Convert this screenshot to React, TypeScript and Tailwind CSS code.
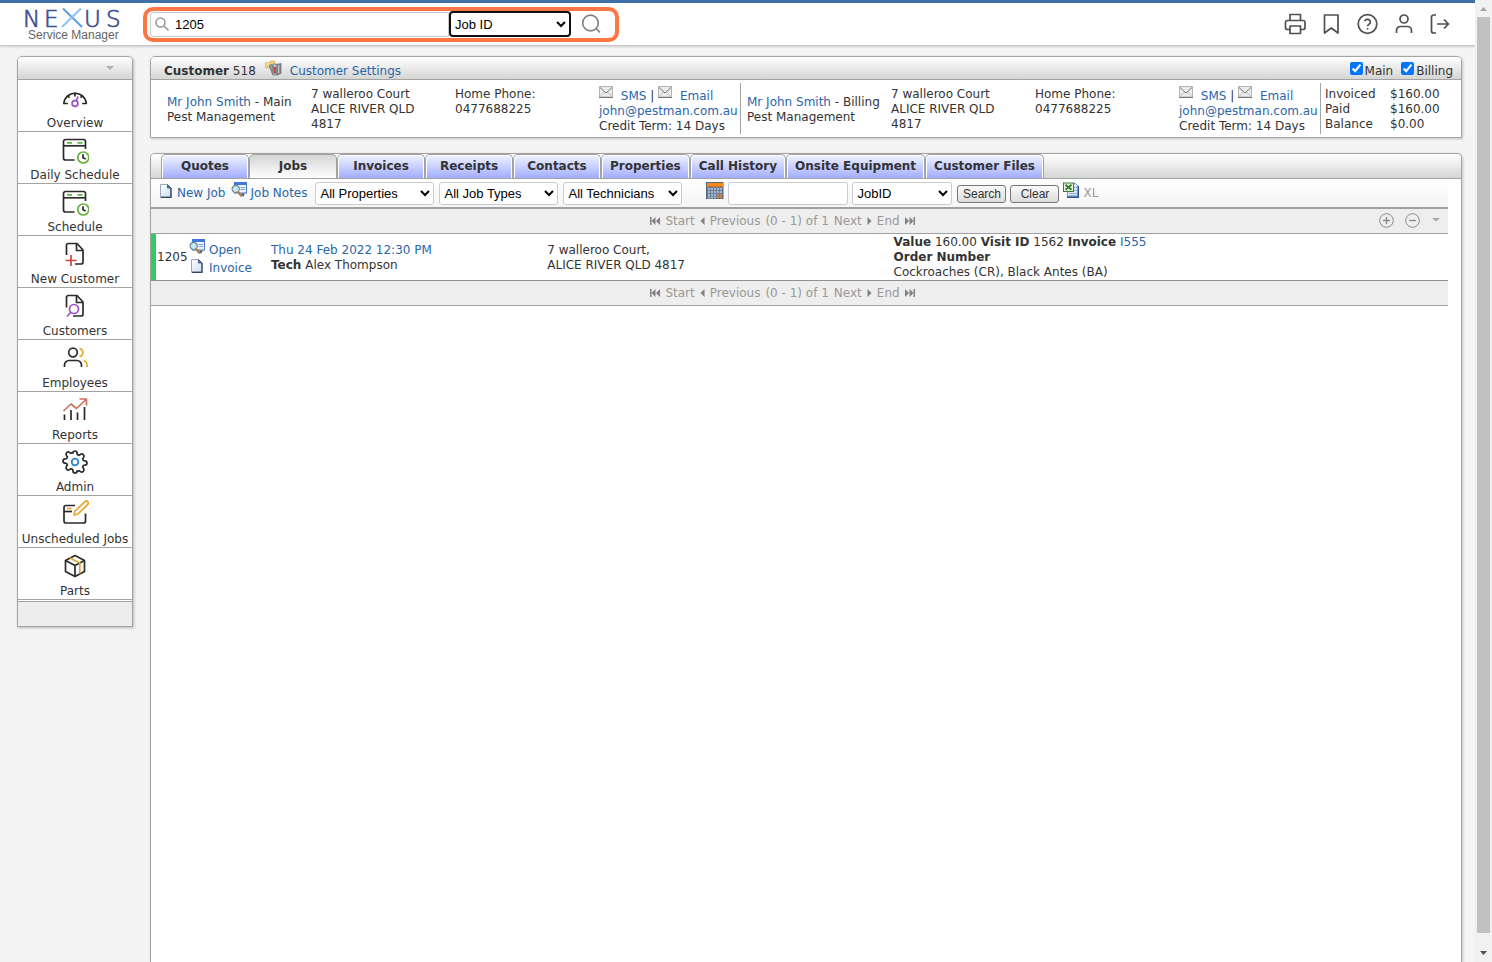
import type { ReactNode } from "react";

const link = "text-[#2a66a8] hover:underline";

/* ---------- small toolbar icons ---------- */

function PageIcon() {
  return (
    <svg width="12" height="14" viewBox="0 0 12 14" className="mb-1 shrink-0" aria-hidden="true">
      <defs>
        <linearGradient id="pg" x1="0" y1="0" x2="1" y2="1">
          <stop offset="0" stopColor="#ffffff" />
          <stop offset="1" stopColor="#cfdcec" />
        </linearGradient>
      </defs>
      <path d="M.5.5h7l3.500 3.500v9h-10.500z" fill="url(#pg)" stroke="#9aa9bf" />
      <path d="M11 4v9.300H.8" fill="none" stroke="#2f4468" strokeWidth="1.300" />
      <path d="M7.500.5V4H11z" fill="#5a76a3" stroke="#2f4468" strokeWidth=".7" />
    </svg>
  );
}

function NotesIcon() {
  return (
    <svg width="16" height="16" viewBox="0 0 16 16" className="shrink-0" aria-hidden="true">
      <rect x="3.500" y=".5" width="12" height="10.500" fill="#eef4fd" stroke="#4c77c4" />
      <rect x="3" y="0" width="13" height="3" fill="#3f78d8" />
      <path d="M9.500 5.500h4.500M9.500 7.500h4.500" stroke="#7f9fd4" />
      <path d="M10 11.500h4l-2 3.500z" fill="#4f5d72" />
      <circle cx="4.700" cy="7" r="3.600" fill="#c4e6f5" stroke="#6f8798" strokeWidth="1.200" />
      <path d="M7.200 10l3 3.800" stroke="#a9824f" strokeWidth="2.200" strokeLinecap="round" />
    </svg>
  );
}

function MailIcon() {
  return (
    <svg width="14" height="12" viewBox="0 0 14 12" className="mr-1 inline-block align-[2px]" aria-hidden="true">
      <rect x=".5" y=".5" width="13" height="10.500" fill="#ececec" stroke="#b4b4b4" />
      <path d="M1 10.500L5.500 6M13 10.500L8.500 6" stroke="#bdbdbd" fill="none" />
      <path d="M1 1.500l6 5.500 6-5.500" stroke="#777" fill="none" />
      <path d="M0 11.500h14" stroke="#777" />
    </svg>
  );
}

function SettingsIcon() {
  return (
    <svg width="17" height="16" viewBox="0 0 17 16" className="shrink-0" aria-hidden="true">
      <path d="M.5 2.500h4l1-1.500h4v7h-9z" fill="#f0cf7a" stroke="#dcb968" strokeWidth=".8" />
      <path d="M1 4h8" stroke="#fbe9b6" />
      <path d="M4 5.500l3-1.500 2.500 9.500-2 1z" fill="#8b97a8" stroke="#5e6878" strokeWidth=".6" />
      <rect x="8" y="4" width="4" height="11" fill="#b8bcc2" stroke="#73777e" strokeWidth=".7" />
      <rect x="8.500" y="7" width="2.500" height="6.500" fill="#d3492f" />
      <path d="M12 4.500l4-1v10l-4 1.500z" fill="#8d9096" stroke="#5f6268" strokeWidth=".7" />
      <path d="M13.500 5v8" stroke="#c9cbd0" />
    </svg>
  );
}

function CalendarIcon() {
  return (
    <svg width="18" height="17" viewBox="0 0 18 17" className="shrink-0" aria-hidden="true">
      <rect x=".5" y=".5" width="16.500" height="16" fill="#6d809b" stroke="#55657d" />
      <rect x="1" y="1" width="16" height="4" fill="#f58a1f" />
      <path d="M2 4.500h14" stroke="#c96a10" strokeDasharray="2 1" />
      <path d="M2 7h14M2 10h14M2 13h8M2 15.500h8" stroke="#b9c8dc" strokeWidth="1.600" strokeDasharray="2 1" />
      <path d="M11 13h5M11 15.500h5" stroke="#f58a1f" strokeWidth="1.600" strokeDasharray="2 1" />
    </svg>
  );
}

function ExcelIcon() {
  return (
    <svg width="16" height="16" viewBox="0 0 16 16" className="shrink-0" aria-hidden="true">
      <path d="M4.500 1.500h8l2.500 2.500v11h-10.500z" fill="#dfeafa" stroke="#7396cf" />
      <path d="M11 5.500h3M11 8.500h3M6 11.500h8M6 13.500h8" stroke="#8fb0df" />
      <path d="M15.300 4v11.300H4" fill="none" stroke="#2d4f96" strokeWidth="1.400" />
      <rect x=".5" y="1" width="10" height="8.500" fill="#e7f3e2" stroke="#3b7a35" />
      <path d="M2.500 2.800l6 5M8.500 2.800l-6 5" stroke="#2c7a2c" strokeWidth="1.800" />
    </svg>
  );
}

/* ---------- sidebar icons ---------- */

function Glyph({ children }: { children: ReactNode }) {
  return (
    <svg
      width="28"
      height="28"
      viewBox="0 0 28 28"
      fill="none"
      stroke="#2b2b2b"
      strokeWidth="1.700"
      strokeLinejoin="round"
      aria-hidden="true"
    >
      {children}
    </svg>
  );
}

function OverviewIcon() {
  return (
    <Glyph>
      <path d="M7 19.500H2.800a11.300 11.300 0 0 1 22.500 0h-4.200" />
      <path d="M14 8.500V12.500M6 11.500l2.500 2.200M22 11.500l-2.500 2.200" />
      <circle cx="14" cy="19.500" r="2.900" stroke="#9c50c8" />
      <path d="M15.200 17l1.800-4.500" stroke="#9c50c8" />
    </Glyph>
  );
}

function ScheduleIcon() {
  return (
    <Glyph>
      <path d="M13.500 24H4.500a2 2 0 0 1-2-2V5.500a2 2 0 0 1 2-2h18a2 2 0 0 1 2 2V13" />
      <path d="M2.500 9.800h22" />
      <path d="M6 6.800h5M16.500 6.800h5" stroke="#64b33c" />
      <circle cx="22.300" cy="21.500" r="5.500" stroke="#64b33c" strokeWidth="1.700" />
      <path d="M22 18.300v3.500l2.700 1.300" />
    </Glyph>
  );
}

function NewCustomerIcon() {
  return (
    <Glyph>
      <path d="M5.500 15V5.500a2 2 0 0 1 2-2H16l6 6.500v12a2 2 0 0 1-2 2h-6" />
      <path d="M15.500 4v6.500H22" />
      <path d="M10 15v11M4.500 20.500h11" stroke="#d2453c" />
    </Glyph>
  );
}

function CustomersIcon() {
  return (
    <Glyph>
      <path d="M5.500 15.500V5.500a2 2 0 0 1 2-2H16l6 6.500v12a2 2 0 0 1-2 2h-8" />
      <path d="M15.500 4v6.500H22" />
      <circle cx="13" cy="17" r="4.500" stroke="#9c50c8" />
      <path d="M9.800 20.200L6 24.500" stroke="#9c50c8" />
    </Glyph>
  );
}

function EmployeesIcon() {
  return (
    <Glyph>
      <circle cx="12" cy="8.500" r="4.300" />
      <path d="M3.500 23v-2a4.500 4.500 0 0 1 4.500-4.500h8a4.500 4.500 0 0 1 4.500 4.500v2" />
      <path d="M18.500 4.300a4.300 4.300 0 0 1 0 8.400M22.500 16.500a4.500 4.500 0 0 1 3.500 4.500v2" stroke="#e9a62c" />
    </Glyph>
  );
}

function ReportsIcon() {
  return (
    <Glyph>
      <path d="M3.500 18.500v5.500M10 14v10M16.500 16.500v7.500M23.500 11v13" />
      <path d="M2.500 15L10 8l5.500 4.500L25 3.500M18.500 3h7v6.500" stroke="#cf7260" />
    </Glyph>
  );
}

function AdminIcon() {
  return (
    <Glyph>
      <circle cx="14" cy="14" r="3.300" stroke="#2585c7" />
      <path d="M12 5Q12 3 14 3t2 2l.4 1.600 1.700.7 1.400-.9q1.500-1.100 2.800.2t.3 2.900l-1 1.400.7 1.600 1.700.3q2 .2 2 2.200t-2 2.100l-1.700.4-.7 1.600 1 1.400q1 1.600-.3 2.900t-2.800.2l-1.400-.9-1.700.7L16 23q0 2-2 2t-2-2l-.4-1.600-1.700-.7-1.400.9q-1.500 1.100-2.800-.2t-.3-2.900l1-1.400-.7-1.600-1.700-.4q-2-.1-2-2.100t2-2.200l1.700-.3.7-1.600-1-1.400q-1-1.600.3-2.900t2.800-.2l1.400.9 1.700-.7z" />
    </Glyph>
  );
}

function UnscheduledIcon() {
  return (
    <Glyph>
      <path d="M14 5.500H5a2 2 0 0 0-2 2V21a2 2 0 0 0 2 2h17.500a2 2 0 0 0 2-2v-7.500" />
      <path d="M3 11.500h8" />
      <path d="M6 8.500h4.500" stroke="#e9a62c" />
      <path d="M13 15l1-4L24 1.600q1.300-1.200 2.600 0t.2 2.800L17 14z" stroke="#e9a62c" />
    </Glyph>
  );
}

function PartsIcon() {
  return (
    <Glyph>
      <path d="M14 3.500l9.500 5v11L14 24.500l-9.500-5v-11z" />
      <path d="M4.500 8.500l9.500 5 9.500-5M14 13.500v11" />
      <path d="M9 6l9.800 5v10.500" stroke="#e9a62c" />
    </Glyph>
  );
}

const menu: { label: string; icon: ReactNode }[] = [
  { label: "Overview", icon: <OverviewIcon /> },
  { label: "Daily Schedule", icon: <ScheduleIcon /> },
  { label: "Schedule", icon: <ScheduleIcon /> },
  { label: "New Customer", icon: <NewCustomerIcon /> },
  { label: "Customers", icon: <CustomersIcon /> },
  { label: "Employees", icon: <EmployeesIcon /> },
  { label: "Reports", icon: <ReportsIcon /> },
  { label: "Admin", icon: <AdminIcon /> },
  { label: "Unscheduled Jobs", icon: <UnscheduledIcon /> },
  { label: "Parts", icon: <PartsIcon /> },
];

const tabs = [
  "Quotes",
  "Jobs",
  "Invoices",
  "Receipts",
  "Contacts",
  "Properties",
  "Call History",
  "Onsite Equipment",
  "Customer Files",
];

/* ---------- header ---------- */

function Logo() {
  return (
    <a href="#" aria-label="Nexus Service Manager" className="w-[120px] shrink-0 pl-6">
      <svg width="100" height="36" viewBox="0 0 100 36" className="block" aria-hidden="true">
        <g fontFamily="DejaVu Sans, sans-serif" fontSize="23" fontWeight="200" fill="#3d4f92" stroke="#3d4f92" strokeWidth=".7">
          <text x="-1" y="21">N</text>
          <text x="20" y="21">E</text>
          <text x="60" y="21">U</text>
          <text x="82" y="21">S</text>
        </g>
        <path d="M39 2.500L58 21" stroke="#58a0e8" strokeWidth="2" />
        <path d="M57 2.500L38 21" stroke="#8cc4f4" strokeWidth="2" />
        <text x="4" y="33" fontFamily="Liberation Sans, sans-serif" fontSize="12" fill="#666">
          Service Manager
        </text>
      </svg>
    </a>
  );
}

function HeaderIcon({ label, children }: { label: string; children: ReactNode }) {
  return (
    <button type="button" aria-label={label} className="size-6">
      <svg width="24" height="24" viewBox="0 0 24 24" fill="none" stroke="#505050" strokeWidth="1.700" strokeLinejoin="round" aria-hidden="true">
        {children}
      </svg>
    </button>
  );
}

function Header() {
  return (
    <header className="flex h-[46px] shrink-0 items-center border-t-3 border-b-1 border-t-[#4170a8] border-b-[#c8c8c8] bg-white shadow-[0_1px_2px_rgba(0,0,0,0.15)]">
      <Logo />
      <form className="ml-[23px] flex h-[35px] w-[476px] items-center rounded-[10px] border-4 border-[#ff7644] pl-[3px]" onSubmit={(e) => e.preventDefault()}>
        <label className="flex h-[25px] flex-1 items-center gap-[6px] rounded-l border border-[#c8c8c8] pl-1">
          <svg width="14" height="14" viewBox="0 0 14 14" fill="none" stroke="#999" strokeWidth="1.600" className="shrink-0" aria-hidden="true">
            <circle cx="5.500" cy="5.500" r="4.500" />
            <path d="M9 9l4.500 4.500" />
          </svg>
          <input aria-label="Search" defaultValue="1205" className="w-full min-w-0 bg-transparent font-['Liberation_Sans',sans-serif] text-[13px] text-black outline-none" />
        </label>
        <select aria-label="Search by" className="h-[26px] w-[122px] rounded-[4px] border-2 border-[#101010] bg-white font-['Liberation_Sans',sans-serif] text-[13px] text-black">
          <option>Job ID</option>
        </select>
        <button type="submit" aria-label="Go" className="w-11 pl-[10px]">
          <svg width="21" height="20" viewBox="0 0 21 20" fill="none" stroke="#808080" strokeWidth="1.700" aria-hidden="true">
            <circle cx="9.500" cy="9" r="7.800" />
            <path d="M15 14.500l4 4" />
          </svg>
        </button>
      </form>
      <nav className="ml-auto flex gap-3 pr-[23px]" aria-label="Account">
        <HeaderIcon label="Print">
          <path d="M6 8.500V2.500h10.500v6M6 17.500H3.500a2 2 0 0 1-2-2v-5a2 2 0 0 1 2-2h15.500a2 2 0 0 1 2 2v5a2 2 0 0 1-2 2h-2.500" />
          <path d="M6 14h10.500v7.500h-10.500z" />
        </HeaderIcon>
        <HeaderIcon label="Bookmarks">
          <path d="M4.500 3h13.500v18l-6.700-5-6.800 5z" />
        </HeaderIcon>
        <HeaderIcon label="Help">
          <circle cx="11.500" cy="12" r="9.300" />
          <path d="M8.700 9.200a2.900 2.900 0 0 1 5.600 1c0 1.900-2.800 2.500-2.800 4M11.500 16v1.500" />
        </HeaderIcon>
        <HeaderIcon label="Profile">
          <circle cx="12" cy="7" r="4" />
          <path d="M4.500 21v-2.500a4 4 0 0 1 4-4h7a4 4 0 0 1 4 4V21" />
        </HeaderIcon>
        <HeaderIcon label="Log out">
          <path d="M8 3H5.500a2 2 0 0 0-2 2v14a2 2 0 0 0 2 2H8M9 12h11.500M16 7.500l4.500 4.500-4.500 4.500" />
        </HeaderIcon>
      </nav>
    </header>
  );
}

/* ---------- sidebar ---------- */

function Sidebar() {
  return (
    <nav aria-label="Main menu" className="w-[116px] shrink-0 self-start rounded-t-[5px] border border-[#a3a3a3] bg-white shadow-[1px_1px_3px_rgba(0,0,0,0.25)]">
      <div className="flex h-[23px] items-center justify-end rounded-t-[4px] border-b border-[#a3a3a3] bg-linear-to-b from-white to-[#d4d6d4] pr-[18px]">
        <svg width="8" height="4" viewBox="0 0 8 4" aria-hidden="true">
          <path d="M0 0h8L4 4z" fill="#b0b0b0" />
        </svg>
      </div>
      <ul>
        {menu.map((m) => (
          <li key={m.label} className="border-b border-[#a3a3a3]">
            <a href="#" className="flex h-[51px] flex-col items-center justify-end gap-1 whitespace-nowrap hover:bg-[#f4f4f4]">
              {m.icon}
              <span className="leading-[15px]">{m.label}</span>
            </a>
          </li>
        ))}
      </ul>
      <div className="mt-px h-[25px] border-t border-[#a3a3a3] bg-[#ededed]" />
    </nav>
  );
}

/* ---------- customer summary ---------- */

function Party({ role }: { role: string }) {
  return (
    <section className="grid flex-1 grid-cols-[1fr_1fr_1fr_141px] items-center border-r border-[#a3a3a3] pt-[2px] pl-[6px] whitespace-nowrap">
      <p>
        <a href="#" className={link}>
          Mr John Smith
        </a>{" "}
        - {role}
        <br />
        Pest Management
      </p>
      <p>
        7 walleroo Court
        <br />
        ALICE RIVER QLD
        <br />
        4817
      </p>
      <p className="self-start pt-[2px]">
        Home Phone:
        <br />
        0477688225
      </p>
      <p>
        <MailIcon />{" "}
        <a href="#" className={link}>
          SMS
        </a>{" "}
        | <MailIcon />{" "}
        <a href="#" className={link}>
          Email
        </a>
        <br />
        <a href="#" className={link}>
          john@pestman.com.au
        </a>
        <br />
        Credit Term: 14 Days
      </p>
    </section>
  );
}

function CustomerPanel() {
  return (
    <section className="rounded-t-[5px] border border-[#a3a3a3] bg-white shadow-[1px_1px_3px_rgba(0,0,0,0.2)]">
      <div className="flex h-[23px] items-center rounded-t-[4px] border-b border-[#a3a3a3] bg-linear-to-b from-white to-[#d4d6d4] pr-2 pl-[13px]">
        <h1 className="pt-[6px] leading-[15px]">
          <b>Customer</b> 518
        </h1>
        <a href="#" className={`ml-[9px] flex items-center gap-2 ${link}`}>
          <SettingsIcon />
          <span className="pt-[6px] leading-[15px]">Customer Settings</span>
        </a>
        <div className="ml-auto flex gap-2">
          <label className="flex items-center gap-[2px]">
            <input type="checkbox" defaultChecked className="size-[13px]" />
            <span className="pt-[6px] leading-[15px]">Main</span>
          </label>
          <label className="flex items-center gap-[2px]">
            <input type="checkbox" defaultChecked className="size-[13px]" />
            <span className="pt-[6px] leading-[15px]">Billing</span>
          </label>
        </div>
      </div>
      <div className="flex py-[3px] pl-[10px] [&>section]:h-[51px]">
        <Party role="Main" />
        <Party role="Billing" />
        <dl className="grid w-[140px] shrink-0 grid-cols-[65px_1fr] content-center pt-[2px] pl-1">
          <dt>Invoiced</dt>
          <dd>$160.00</dd>
          <dt>Paid</dt>
          <dd>$160.00</dd>
          <dt>Balance</dt>
          <dd>$0.00</dd>
        </dl>
      </div>
    </section>
  );
}

/* ---------- jobs ---------- */

function Filter({ label, value, width }: { label: string; value: string; width: string }) {
  return (
    <select aria-label={label} className={`h-[23px] rounded-[3px] border border-[#ccc] bg-white font-['Liberation_Sans',sans-serif] text-[13px] text-black ${width}`}>
      <option>{value}</option>
    </select>
  );
}

function Toolbar() {
  const button =
    "h-[18px] w-[49px] rounded-[3px] border border-[#767676] bg-linear-to-b from-[#fafafa] to-[#dcdcdc] font-['Liberation_Sans',sans-serif] text-[12px] leading-[16px] text-[#333]";
  return (
    <div className="flex h-[30px] items-center border-b-2 border-[#a0a0a0] bg-linear-to-b from-white to-[#f5f5f5] pl-[9px]">
      <a href="#" className={`flex items-center gap-[5px] ${link}`}>
        <PageIcon />
        New Job
      </a>
      <a href="#" className={`ml-[5px] flex items-center gap-1 ${link}`}>
        <span className="pb-[6px]">
          <NotesIcon />
        </span>
        Job Notes
      </a>
      <div className="ml-2 flex gap-[5px]">
        <Filter label="Property" value="All Properties" width="w-[119px]" />
        <Filter label="Job type" value="All Job Types" width="w-[119px]" />
        <Filter label="Technician" value="All Technicians" width="w-[119px]" />
      </div>
      <button type="button" aria-label="Pick a date" className="ml-6 pb-[6px]">
        <CalendarIcon />
      </button>
      <div className="ml-1 flex items-center gap-1">
        <input aria-label="Search text" className="h-[23px] w-[120px] rounded-[3px] border border-[#ccc] bg-white px-1" />
        <Filter label="Search field" value="JobID" width="w-[100px]" />
        <div className="flex items-center gap-1 pt-[2px] pl-px">
          <button type="button" className={button}>
            Search
          </button>
          <button type="button" className={button}>
            Clear
          </button>
        </div>
        <a href="#" className="flex items-center gap-1 text-[#999]">
          <span className="pb-[6px]">
            <ExcelIcon />
          </span>
          XL
        </a>
      </div>
    </div>
  );
}

function Step({ d, width }: { d: string; width: string }) {
  return (
    <svg width={width} height="8" viewBox={`0 0 ${width} 8`} fill="#808080" className="mb-px" aria-hidden="true">
      <path d={d} />
    </svg>
  );
}

function Pager({ controls = false }: { controls?: boolean }) {
  return (
    <div className="grid h-[25px] grid-cols-[42px_1fr_76px] items-center border-b border-[#a0a0a0] bg-[#eee] text-[#999]">
      <div className="col-start-2 flex items-center justify-center gap-[5px]">
        <button type="button" className="flex items-center gap-[5px]">
          <Step width="10" d="M0 0h1.500v8H0zM5.500 0v8L1.500 4zM10 0v8L6 4z" />
          Start
        </button>
        <button type="button" className="flex items-center gap-[5px]">
          <Step width="5" d="M4.500 0v8L.5 4z" />
          Previous
        </button>
        <span>(0 - 1) of 1</span>
        <button type="button" className="flex items-center gap-[5px]">
          Next
          <Step width="5" d="M.5 0v8l4-4z" />
        </button>
        <button type="button" className="flex items-center gap-[5px]">
          End
          <Step width="10" d="M8.500 0H10v8H8.500zM4.500 0v8l4-4zM0 0v8l4-4z" />
        </button>
      </div>
      {controls && (
        <div className="flex items-center gap-[10px] pb-[2px] pl-[6px]">
          <button type="button" aria-label="Expand all">
            <svg width="16" height="16" viewBox="0 0 16 16" fill="none" stroke="#8a8a8a" aria-hidden="true" className="block">
              <circle cx="8.500" cy="8.500" r="6.800" />
              <path d="M5 8.500h7M8.500 5v7" strokeWidth="1.300" />
            </svg>
          </button>
          <button type="button" aria-label="Collapse all">
            <svg width="16" height="16" viewBox="0 0 16 16" fill="none" stroke="#8a8a8a" aria-hidden="true" className="block">
              <circle cx="8.500" cy="8.500" r="6.800" />
              <path d="M5 8.500h7" strokeWidth="1.300" />
            </svg>
          </button>
          <button type="button" aria-label="Options" className="pl-[2px]">
            <svg width="8" height="4" viewBox="0 0 8 4" aria-hidden="true" className="block">
              <path d="M0 0h8L4 3.500z" fill="#a8a8a8" />
            </svg>
          </button>
        </div>
      )}
    </div>
  );
}

function JobsTable() {
  return (
    <table className="w-full table-fixed border-separate border-spacing-0 border-b border-[#909090] text-left [&_td]:p-0 [&_td]:pt-px">
      <colgroup>
        <col className="w-[38px]" />
        <col className="w-[82px]" />
        <col className="w-[21.300%]" />
        <col className="w-[26.700%]" />
        <col />
      </colgroup>
      <tbody>
        <tr>
          <td className="border-l-5 border-[#2ecc62]">
            <span className="pl-px">1205</span>
          </td>
          <td>
            <div className="pt-[3px]">
              <a href="#" className={`flex h-[18px] items-center gap-1 ${link}`}>
                <span className="pb-[6px]">
                  <NotesIcon />
                </span>
                Open
              </a>
              <a href="#" className={`flex h-[18px] items-center gap-[6px] pl-[2px] ${link}`}>
                <PageIcon />
                Invoice
              </a>
            </div>
          </td>
          <td>
            <a href="#" className={link}>
              Thu 24 Feb 2022 12:30 PM
            </a>
            <br />
            <b>Tech</b> Alex Thompson
          </td>
          <td>
            7 walleroo Court,
            <br />
            ALICE RIVER QLD 4817
          </td>
          <td>
            <b>Value</b> 160.00 <b>Visit ID</b> 1562 <b>Invoice</b>{" "}
            <a href="#" className={link}>
              I555
            </a>
            <br />
            <b>Order Number</b>
            <br />
            Cockroaches (CR), Black Antes (BA)
          </td>
        </tr>
      </tbody>
    </table>
  );
}

function JobsPanel() {
  return (
    <section className="flex-1 rounded-t-[5px] border border-b-0 border-[#a3a3a3] bg-white shadow-[1px_1px_3px_rgba(0,0,0,0.2)]">
      <div role="tablist" className="flex h-[25px] rounded-t-[4px] border-b border-[#a3a3a3] bg-linear-to-b from-white to-[#d4d6d4] pl-[10px]">
        {tabs.map((t) => (
          <button
            key={t}
            type="button"
            role="tab"
            aria-selected={t === "Jobs"}
            className={`min-w-[88px] rounded-t-[5px] border-x border-t border-[#a3a3a3] px-2 text-center font-bold whitespace-nowrap ${
              t === "Jobs"
                ? "bg-linear-to-b from-[#d4d6d4] to-white"
                : "bg-linear-to-b from-[#f1f3ff] to-[#a3adff] shadow-[inset_1px_1px_0_#fff,inset_-1px_0_0_#fff]"
            }`}
          >
            {t}
          </button>
        ))}
      </div>
      <div className="mr-[13px]">
        <Toolbar />
        <Pager controls />
        <JobsTable />
        <Pager />
      </div>
    </section>
  );
}

function Scrollbar() {
  return (
    <div className="flex w-[17px] shrink-0 flex-col items-center bg-[#f1f1f1]" aria-hidden="true">
      <svg width="17" height="17" viewBox="0 0 17 17">
        <path d="M5 11h7L8.500 7z" fill="#a3a3a3" />
      </svg>
      <div className="w-[13px] flex-1 bg-[#c1c1c1]" />
      <svg width="17" height="29" viewBox="0 0 17 29">
        <path d="M5 18h7L8.500 22z" fill="#505050" />
      </svg>
    </div>
  );
}

export default function App() {
  return (
    <div className="flex h-screen overflow-hidden bg-[#f4f4f4] font-['DejaVu_Sans',Verdana,sans-serif] text-[12px] leading-[15px] text-[#333]">
      <div className="flex min-w-0 flex-1 flex-col">
        <Header />
        <div className="flex min-h-0 flex-1 gap-[17px] pt-[10px] pr-[13px] pl-[17px]">
          <Sidebar />
          <main className="flex min-w-0 flex-1 flex-col gap-[15px]">
            <CustomerPanel />
            <JobsPanel />
          </main>
        </div>
      </div>
      <Scrollbar />
    </div>
  );
}
